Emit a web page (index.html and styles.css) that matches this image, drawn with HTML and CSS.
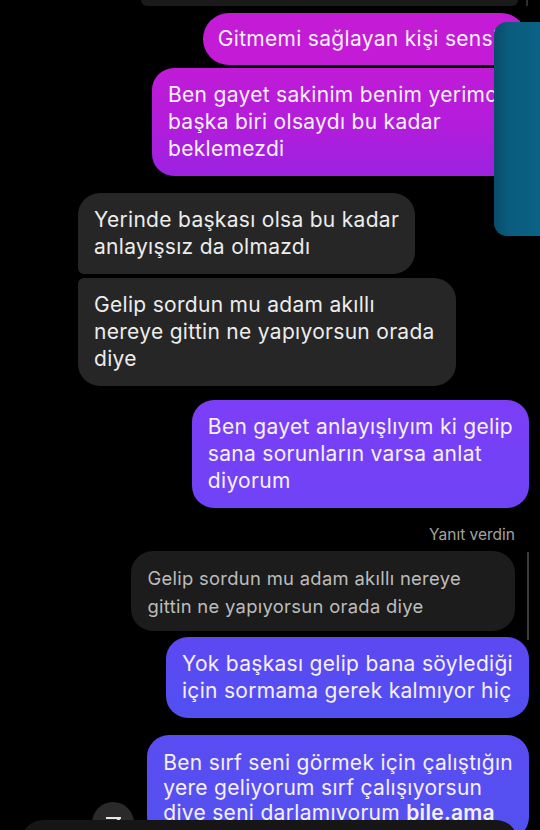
FILE: index.html
```html
<!DOCTYPE html>
<html lang="tr">
<head>
  <meta charset="UTF-8">
  <title>Sohbet</title>
  <meta name="viewport" content="width=device-width, initial-scale=1.0">
  <link rel="stylesheet" href="styles.css">
</head>
<body>
  <div class="screen">
    <div class="prev-row">
      <div class="prev-file"></div>
    </div>

    <div class="thread">
      <div class="group out">
        <div class="msg pink single">Gitmemi sağlayan kişi sensin</div>
        <div class="msg pink grad last">Ben gayet sakinim benim yerimde<br>başka biri olsaydı bu kadar<br>beklemezdi</div>
      </div>

      <div class="group in">
        <div class="msg gray first">Yerinde başkası olsa bu kadar<br>anlayışsız da olmazdı</div>
        <div class="msg gray last">Gelip sordun mu adam akıllı<br>nereye gittin ne yapıyorsun orada<br>diye</div>
      </div>

      <div class="group out">
        <div class="msg violet">Ben gayet anlayışlıyım ki gelip<br>sana sorunların varsa anlat<br>diyorum</div>
      </div>

      <div class="reply">
        <div class="reply-label">Yanıt verdin</div>
        <div class="reply-row">
          <div class="quote">Gelip sordun mu adam akıllı nereye<br>gittin ne yapıyorsun orada diye</div>
          <div class="reply-bar"></div>
        </div>
        <div class="msg blue">Yok başkası gelip bana söylediği<br>için sormama gerek kalmıyor hiç</div>
      </div>

      <div class="group out">
        <div class="msg blue deep">Ben sırf seni görmek için çalıştığın<br>yere geliyorum sırf çalışıyorsun<br>diye seni darlamıyorum <b>bile.ama</b></div>
      </div>
    </div>

    <div class="side-panel"></div>
    <div class="scroll-btn">
      <svg width="16" height="10" viewBox="0 0 16 10"><path d="M1 2 H15 L9 8" fill="none" stroke="#e8e8e8" stroke-width="2.2"/></svg>
    </div>
    <div class="composer"></div>
  </div>
</body>
</html>
```

FILE: styles.css
```css
body {
  margin: 0;
  background: #000;
  font-family: Inter, Roboto, sans-serif;
}

.screen {
  position: relative;
  width: 540px;
  height: 830px;
  overflow: hidden;
  background: #000;
}

.prev-row {
  height: 6px;
  display: flex;
  padding-left: 141px;
  border-right: 2px solid #2e2e2e;
  margin-right: 12px;
}

.prev-file {
  flex: 1;
  background: #1a1a1a;
  border-radius: 0 0 14px 14px;
  margin-right: 8px;
}

.thread {
  display: flex;
  flex-direction: column;
  padding-top: 7px;
}

.group {
  display: flex;
  flex-direction: column;
  margin-bottom: 17px;
}

.group.out {
  align-items: flex-end;
  gap: 3px;
}

.group.in {
  align-items: flex-start;
  gap: 4px;
  margin-bottom: 14px;
}

.msg {
  font-size: 21px;
  letter-spacing: 0.3px;
  line-height: 27px;
  padding: 13px 16px 14px;
  border-radius: 22px;
  color: #f6f0fd;
  white-space: nowrap;
}

.msg b {
  font-weight: 600;
}

.pink {
  background: #c31bd6;
  margin-right: 13px;
}

.pink.single {
  padding: 12px 16px 13px 15px;
  border-radius: 26px;
}

.pink.grad {
  background: linear-gradient(180deg, #c11bd7 0%, #b11ddb 55%, #9c22e2 100%);
  border-radius: 22px 6px 22px 22px;
}

.gray {
  background: #262626;
  color: #ececec;
  margin-left: 78px;
}

.gray.first {
  border-radius: 22px 22px 22px 6px;
}

.gray.last {
  border-radius: 6px 22px 22px 22px;
  padding-right: 21px;
}

.violet {
  background: linear-gradient(180deg, #7c3ef6 0%, #6f43f6 100%);
  margin-right: 11px;
}

.reply {
  display: flex;
  flex-direction: column;
  align-items: flex-end;
  margin-bottom: 17px;
}

.reply-label {
  color: #a3a3a3;
  font-size: 15.5px;
  line-height: 20px;
  margin: 0 25px 6px 0;
}

.reply-row {
  display: flex;
  align-items: flex-start;
  margin-right: 11px;
}

.quote {
  background: #1c1c1c;
  color: #bcbcbc;
  font-size: 18.4px;
  letter-spacing: 0.3px;
  line-height: 28px;
  padding: 13px 54px 11px 16px;
  border-radius: 22px;
  white-space: nowrap;
}

.reply-bar {
  width: 2px;
  height: 88px;
  background: #3a3a3a;
  margin-left: 12px;
  margin-top: 1px;
}

.blue {
  background: linear-gradient(180deg, #5d48f3 0%, #5150f1 100%);
  margin-right: 11px;
  margin-top: -3px;
}

.blue.deep {
  background: linear-gradient(180deg, #5a4cf2 0%, #5351f0 100%);
  margin-top: 0;
  line-height: 25px;
  padding-top: 15px;
}

.side-panel {
  position: absolute;
  left: 494px;
  top: 22px;
  width: 60px;
  height: 214px;
  border-radius: 13px;
  background: linear-gradient(90deg, #094d68 0%, #0a5c7e 25%, #0b6587 100%);
}

.scroll-btn {
  position: absolute;
  left: 92px;
  top: 802px;
  width: 42px;
  height: 42px;
  border-radius: 50%;
  background: #2a2a2a;
  display: flex;
  justify-content: center;
  padding-top: 14px;
  box-sizing: border-box;
}

.composer {
  position: absolute;
  left: 21px;
  right: 22px;
  top: 820px;
  height: 60px;
  border-radius: 22px;
  background: #161616;
}
```
